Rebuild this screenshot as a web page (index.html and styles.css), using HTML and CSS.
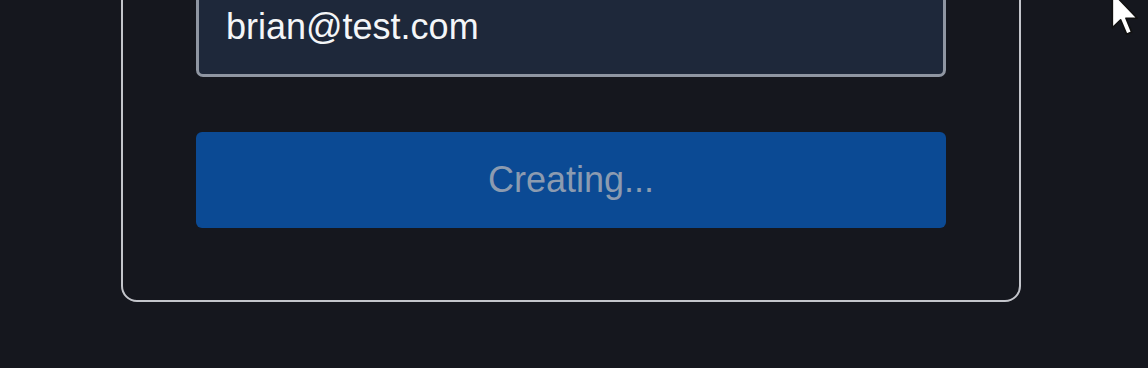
FILE: index.html
```html
<!DOCTYPE html>
<html lang="en">
<head>
<meta charset="UTF-8">
<title>Create Account</title>
<link rel="stylesheet" href="styles.css">
</head>
<body>
<div class="card">
  <form class="signup-form">
    <input type="email" class="field" value="brian@test.com">
    <button type="button" class="button" disabled>Creating...</button>
  </form>
</div>
<svg class="cursor" width="30" height="46" viewBox="0 0 13 20">
  <path d="M1 1 L1 16.5 L4.6 13 L7.2 19.2 L9.4 18.3 L6.9 12.3 L11.8 12.3 Z" fill="#fff" stroke="#111" stroke-width="0.7" stroke-linejoin="round"/>
</svg>
</body>
</html>
```

FILE: styles.css
```css
html, body {
  margin: 0;
  height: 100%;
  overflow: hidden;
}
body {
  font-family: "Liberation Sans", Arial, sans-serif;
  background-color: #15171e;
  position: relative;
}
.card {
  width: 900px;
  box-sizing: border-box;
  margin: -100px 0 0 121px;
  padding: 74px 73px 72px;
  border: 2px solid #c3c5cb;
  border-radius: 16px;
}
.signup-form {
  display: flex;
  flex-direction: column;
  gap: 55px;
}
.field {
  display: block;
  width: 100%;
  box-sizing: border-box;
  font-family: inherit;
  font-size: 36px;
  line-height: 41px;
  padding: 27px 27px;
  color: #f4f6f8;
  background-color: #1e283a;
  border: 3px solid #8f96a2;
  border-radius: 7px;
  outline: none;
}
.button {
  display: block;
  width: 100%;
  height: 96px;
  font-family: inherit;
  font-size: 36px;
  color: #8c9bb0;
  background-color: #0b4a94;
  border: none;
  border-radius: 6px;
  cursor: not-allowed;
}
.cursor {
  position: absolute;
  left: 1110px;
  top: -10px;
}
```
